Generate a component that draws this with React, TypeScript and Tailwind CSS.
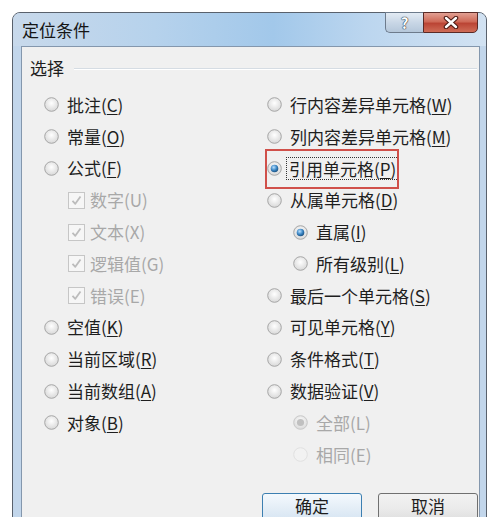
import React from "react";

const FONT = { fontFamily: '"Noto Sans CJK SC", "Noto Sans", sans-serif' };

type RState = "off" | "on" | "disOn" | "disOff";

function Radio({ state }: { state: RState }) {
  const ring = state === "disOn" ? "#c8c8c8" : state === "disOff" ? "#e0e0e0" : "#a6a6a6";
  return (
    <svg width="15" height="15" viewBox="0 0 15 15" className="shrink-0">
      <defs>
        <radialGradient id="rf" cx="50%" cy="40%" r="60%">
          <stop offset="0%" stopColor="#ffffff" />
          <stop offset="100%" stopColor="#d8d8d8" />
        </radialGradient>
        <radialGradient id="rd" cx="40%" cy="35%" r="70%">
          <stop offset="0%" stopColor="#b9e0ff" />
          <stop offset="55%" stopColor="#3b86c4" />
          <stop offset="100%" stopColor="#174a78" />
        </radialGradient>
      </defs>
      <circle cx="7.5" cy="7.5" r="6.8" fill={state === "disOff" ? "#f2f2f2" : "url(#rf)"} stroke={ring} strokeWidth="1" />
      {state === "on" && <circle cx="7.5" cy="7.5" r="3.8" fill="url(#rd)" />}
      {state === "disOn" && <circle cx="7.5" cy="7.5" r="3.6" fill="#c0c0c0" />}
    </svg>
  );
}

function Check() {
  return (
    <svg width="17" height="17" viewBox="0 0 17 17" className="shrink-0">
      <rect x="0.5" y="0.5" width="16" height="16" fill="#f6f6f6" stroke="#c6c6c6" />
      <path d="M4.5 8.8 L7.3 11.8 L12.5 4.5" fill="none" stroke="#bcbcbc" strokeWidth="1.8" strokeLinejoin="round" />
    </svg>
  );
}

function Label({ text, acc, disabled }: { text: string; acc?: string; disabled?: boolean }) {
  return (
    <span className={disabled ? "text-[#a8a8a8]" : "text-[#1e1e1e]"}>
      {text}
      {acc !== undefined && (
        <>
          (<span className="underline underline-offset-2">{acc}</span>)
        </>
      )}
    </span>
  );
}

function RRow({ state, text, acc, indent, disabled, plain }: { state: RState; text: string; acc: string; indent?: boolean; disabled?: boolean; plain?: boolean }) {
  return (
    <div className={`flex items-center h-[31.8px] gap-[8px] ${indent ? "pl-[26px]" : ""}`}>
      <Radio state={state} />
      {plain ? <Label text={`${text}(${acc})`} disabled={disabled} /> : <Label text={text} acc={acc} disabled={disabled} />}
    </div>
  );
}

function CRow({ text }: { text: string }) {
  return (
    <div className="flex items-center h-[31.8px] gap-[5px] pl-[24px]">
      <Check />
      <Label text={text} disabled />
    </div>
  );
}

export default function App() {
  return (
    <div className="w-[500px] h-[517px] overflow-hidden bg-white relative text-[17px] leading-[24px]" style={FONT}>
      <div className="ml-[12px] mt-[12px] w-[475px] h-[560px] rounded-t-[8px] border border-[#59616c] bg-[#c2d6eb] flex flex-col">
        {/* title bar */}
        <div className="h-[33px] flex items-start justify-between pl-[9px] pr-[8px] rounded-t-[7px] bg-[linear-gradient(90deg,#c8d9eb_0%,#b6d2ec_30%,#a2c8ea_55%,#bcd6ef_75%,#d2e2f2_100%)]">
          <div className="mt-[5px] text-[17px] text-[#151515]">定位条件</div>
          <div className="flex -mt-[1px]">
            <div className="w-[38px] h-[21px] border border-[#6d7b8c] border-r-0 rounded-bl-[5px] bg-[linear-gradient(180deg,#e3ebf4_0%,#c9d7e6_50%,#b5c7da_100%)] flex items-center justify-center">
              <span className="text-[15px] font-bold leading-none text-white [text-shadow:0_0_1px_#2a3542,0_0_1px_#2a3542,0_0_1px_#2a3542]">?</span>
            </div>
            <div className="w-[55px] h-[21px] border border-[#5a2a26] rounded-br-[5px] bg-[linear-gradient(180deg,#e2a093_0%,#cf6a58_45%,#bb4535_55%,#cf6c57_100%)] flex items-center justify-center">
              <svg width="16" height="13" viewBox="0 0 16 13">
                <path d="M3 2 L13 11 M13 2 L3 11" stroke="#4a1a14" strokeWidth="4.5" strokeLinecap="round" />
                <path d="M3 2 L13 11 M13 2 L3 11" stroke="#ffffff" strokeWidth="2.4" strokeLinecap="round" />
              </svg>
            </div>
          </div>
        </div>
        {/* content */}
        <div className="flex-1 ml-[8px] mr-[6px] border border-[#8497ad] bg-[#f0f0f0] flex flex-col">
          <div className="flex items-center pt-[9px] pl-[8px] pr-[2px]">
            <span className="text-[#1e1e1e]">选择</span>
            <div className="flex-1 ml-[10px] mt-[2px] border-t border-[#d5dce3] border-b border-b-white" />
          </div>
          <div className="grid grid-cols-[223px_1fr] pl-[22px] pt-[9px]">
            <div className="flex flex-col">
              <RRow state="off" text="批注" acc="C" />
              <RRow state="off" text="常量" acc="O" />
              <RRow state="off" text="公式" acc="F" />
              <CRow text="数字(U)" />
              <CRow text="文本(X)" />
              <CRow text="逻辑值(G)" />
              <CRow text="错误(E)" />
              <RRow state="off" text="空值" acc="K" />
              <RRow state="off" text="当前区域" acc="R" />
              <RRow state="off" text="当前数组" acc="A" />
              <RRow state="off" text="对象" acc="B" />
            </div>
            <div className="flex flex-col">
              <RRow state="off" text="行内容差异单元格" acc="W" />
              <RRow state="off" text="列内容差异单元格" acc="M" />
              <div className="flex items-center h-[31.8px] gap-[5px]">
                <Radio state="on" />
                <span className="px-[2px] outline outline-1 outline-dotted outline-[#333] leading-[21px] text-[#1e1e1e]">
                  引用单元格(<span className="underline underline-offset-2">P</span>)
                </span>
              </div>
              <RRow state="off" text="从属单元格" acc="D" />
              <RRow state="on" text="直属" acc="I" indent />
              <RRow state="off" text="所有级别" acc="L" indent />
              <RRow state="off" text="最后一个单元格" acc="S" />
              <RRow state="off" text="可见单元格" acc="Y" />
              <RRow state="off" text="条件格式" acc="T" />
              <RRow state="off" text="数据验证" acc="V" />
              <RRow state="disOn" text="全部" acc="L" indent disabled plain />
              <RRow state="disOff" text="相同" acc="E" indent disabled plain />
            </div>
          </div>
          <div className="flex gap-[16px] pl-[240px] mt-[22px]">
            <div className="w-[100px] h-[30px] rounded-[3px] border border-[#3c7fb1] bg-[linear-gradient(180deg,#f4f9fd_0%,#e4eef7_50%,#d4e3f1_100%)] flex items-start justify-center pt-[1px] leading-[22px] text-[#1e1e1e]">
              确定
            </div>
            <div className="w-[100px] h-[30px] rounded-[3px] border border-[#707070] bg-[linear-gradient(180deg,#f2f2f2_0%,#ebebeb_50%,#dddddd_100%)] flex items-start justify-center pt-[1px] leading-[22px] text-[#1e1e1e]">
              取消
            </div>
          </div>
        </div>
      </div>
      {/* red highlight box */}
      <div className="absolute left-[265px] top-[149px] w-[134px] h-[40px] border-2 border-[#d0504a]" />
    </div>
  );
}
